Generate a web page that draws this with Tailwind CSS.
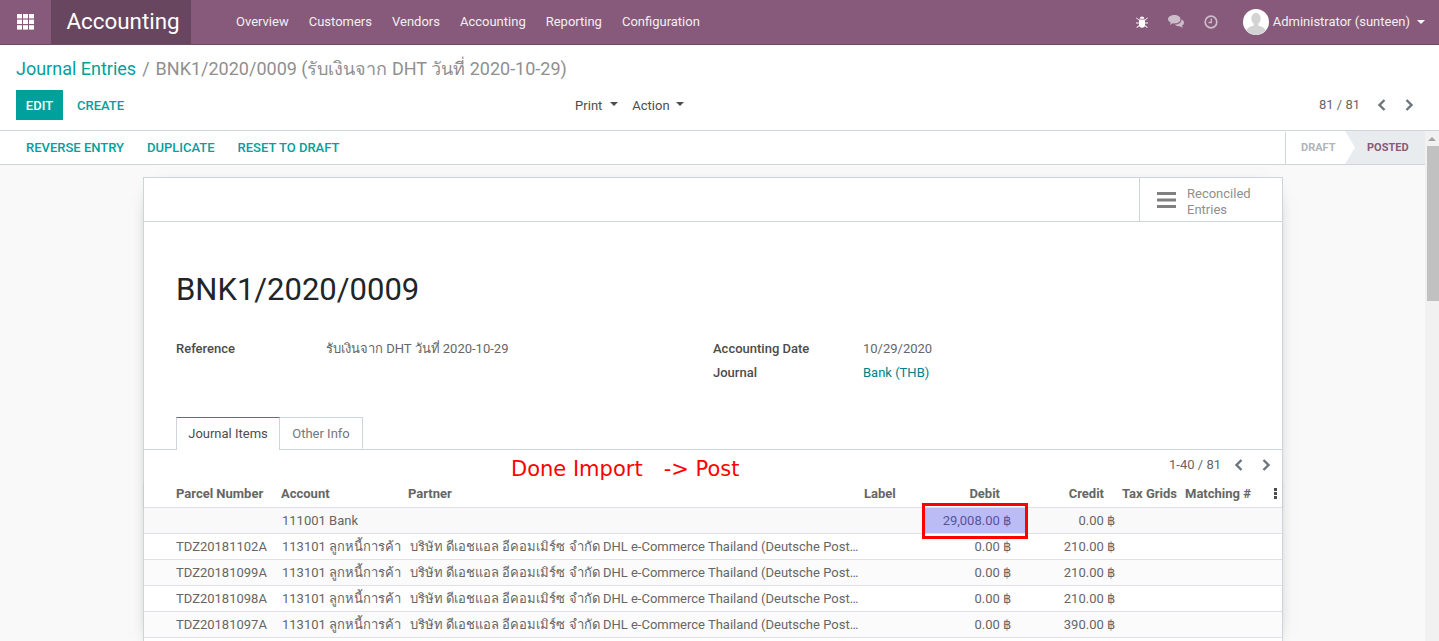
<!DOCTYPE html>
<html lang="en">
<head>
    <meta charset="UTF-8" />
    <title>Journal Entries - BNK1/2020/0009</title>
    <script src="https://cdn.jsdelivr.net/npm/@tailwindcss/browser@4"></script>
</head>
<body class="h-[641px] overflow-hidden bg-white font-['Roboto','Noto_Sans',sans-serif] text-[13px] text-[#666666]">
    <!-- Navbar -->
    <header class="flex h-[45px] items-stretch border-b border-[#6d4a64] bg-[#875A7B] text-white">
        <a class="flex w-[51px] items-center justify-center">
            <svg class="h-[16px] w-[17px]" viewBox="0 0 17 16" fill="#fff">
                <rect x="0" y="0" width="5" height="4.4"/><rect x="6" y="0" width="5" height="4.4"/><rect x="12" y="0" width="5" height="4.4"/>
                <rect x="0" y="5.6" width="5" height="4.4"/><rect x="6" y="5.6" width="5" height="4.4"/><rect x="12" y="5.6" width="5" height="4.4"/>
                <rect x="0" y="11.2" width="5" height="4.4"/><rect x="6" y="11.2" width="5" height="4.4"/><rect x="12" y="11.2" width="5" height="4.4"/>
            </svg>
        </a>
        <div class="flex w-[140px] items-center justify-center pb-[1px] pl-[4px] text-[22.4px] bg-[#68465f]">Accounting</div>
        <nav class="ml-[45px] flex items-center gap-[20px] text-[#f3eef2]">
            <a>Overview</a><a>Customers</a><a>Vendors</a><a>Accounting</a><a>Reporting</a><a>Configuration</a>
        </nav>
        <div class="ml-auto flex items-center pr-[14px]">
            <svg class="h-[12px] w-[12px]" viewBox="0 0 13 13" fill="#fff"><path d="M4 3a2.500 2.500 0 0 1 5 0zM3.200 3.800h6.600v6c0 1.800-1.400 3-3.300 3s-3.300-1.200-3.300-3zM0.500 1.500l3 2.500-.6.700-3-2.500zM12.500 1.500l-3 2.500.6.700 3-2.500zM0 7h3v1H0zM10 7h3v1h-3zM3 10l.6.700-2.600 2.300-.6-.8zM10 10l-.6.700 2.600 2.300.6-.8z"/></svg>
            <svg class="ml-[20px] h-[14px] w-[16px]" viewBox="0 0 16 14" fill="#cdbcc9"><path d="M6.500 0C10 0 12.500 1.800 12.500 4.200S10 8.400 6.500 8.400c-.6 0-1.200 0-1.700-.2L2 10l.7-2.600C1 6.600 0 5.500 0 4.200 0 1.800 3 0 6.500 0z"/><path d="M13.500 4.500C15 5.200 16 6.300 16 7.700c0 1.200-.8 2.200-2 2.900l.6 2.400-2.800-1.700c-2 .2-4-.4-5-1.700 3.800 0 6.800-2 6.700-5.100z"/></svg>
            <svg class="ml-[20px] h-[14px] w-[14px]" viewBox="0 0 14 14" fill="none" stroke="#cdbcc9" stroke-width="1.700"><circle cx="7" cy="7" r="5.800"/><path d="M7.300 3.500v4H4.500" stroke-width="1.300"/></svg>
            <span class="relative ml-[25px] h-[26px] w-[26px] overflow-hidden rounded-full bg-white">
                <svg class="h-full w-full" viewBox="0 0 26 26" fill="#d3d3d3"><path d="M13 4c3 0 4.600 2.500 4.600 5.500 0 2.300-1 4.300-2.300 5.300v1.700c2.800 1 5.700 2 6.700 3.500v6.500H4V20c1-1.500 3.900-2.500 6.700-3.500v-1.700c-1.300-1-2.300-3-2.300-5.300C8.400 6.500 10 4 13 4z"/></svg>
            </span>
            <span class="ml-[4px] text-[#f3eef2]">Administrator (sunteen)</span>
            <span class="ml-[7px] h-0 w-0 border-x-[4px] border-t-[4px] border-x-transparent border-t-white"></span>
        </div>
    </header>

    <!-- Control panel -->
    <section class="h-[86px] border-b border-[#ced4da] px-[16px]">
        <div class="h-[45px] pt-[11px] text-[18px] leading-[26px] text-[#8f8f8f]">
            <a class="text-[#00A09D]">Journal Entries</a><span class="mx-[6px]">/</span><span>BNK1/2020/0009 (รับเงินจาก DHT วันที่ 2020-10-29)</span>
        </div>
        <div class="flex h-[30px] items-center">
            <button class="h-[30px] w-[47px] bg-[#00A09D] pt-[1px] text-[13px] font-medium text-white">EDIT</button>
            <button class="ml-[14px] pt-[1px] text-[13px] font-medium text-[#00A09D]">CREATE</button>
            <div class="ml-[451px] flex items-center pt-[1px] text-[#4c4c4c]">
                <span>Print</span><span class="ml-[8px] h-0 w-0 -translate-y-[2px] border-x-[4px] border-t-[4px] border-x-transparent border-t-[#4c4c4c]"></span>
                <span class="ml-[14px]">Action</span><span class="ml-[6px] h-0 w-0 -translate-y-[2px] border-x-[4px] border-t-[4px] border-x-transparent border-t-[#4c4c4c]"></span>
            </div>
            <div class="ml-auto flex items-center pr-[9px]">
                <span>81 / 81</span>
                <svg class="ml-[17px] h-[12px] w-[9px]" viewBox="0 0 9 12" fill="none" stroke="#6c757d" stroke-width="2.400"><path d="M7.500 1 2.500 6l5 5"/></svg>
                <svg class="ml-[19px] h-[12px] w-[9px]" viewBox="0 0 9 12" fill="none" stroke="#6c757d" stroke-width="2.400"><path d="M1.500 1l5 5-5 5"/></svg>
            </div>
        </div>
    </section>

    <div class="flex h-[510px]">
        <main class="w-[1425px] bg-[#f9f9f9]">
            <!-- Status bar -->
            <div class="flex h-[34px] items-stretch border-b border-[#ced4da] bg-white">
                <div class="flex items-center gap-[23px] pl-[26px] text-[13px] font-medium text-[#00A09D]">
                    <a>REVERSE ENTRY</a><a>DUPLICATE</a><a>RESET TO DRAFT</a>
                </div>
                <div class="ml-auto flex pt-[1px] text-[11px] font-bold">
                    <div class="flex w-[60px] items-center border-l border-[#ced4da] pl-[15px] text-[#adb5bd]">DRAFT</div>
                    <div class="-mt-[1px] flex w-[80px] items-center bg-[#e9ecef] pl-[22px] pt-[1px] text-[#875A7B] [clip-path:polygon(0_0,100%_0,100%_100%,0_100%,10px_50%)]">POSTED</div>
                </div>
            </div>

            <!-- Sheet -->
            <div class="relative ml-[143px] mt-[12px] h-[470px] w-[1140px] border border-[#ced4da] bg-white shadow-[0_5px_20px_-15px_black]">
                <div class="flex h-[44px] justify-end border-b border-[#ced4da]">
                    <div class="flex w-[143px] items-center border-l border-[#ced4da] pl-[17px] pt-[5px] leading-[16px] text-[#8f8f8f]">
                        <svg class="-mt-[5px] h-[16px] w-[20px]" viewBox="0 0 20 16" fill="#808080"><rect y="0" width="19" height="3"/><rect y="6.500" width="19" height="3"/><rect y="13" width="19" height="3"/></svg>
                        <span class="ml-[10px]">Reconciled<br>Entries</span>
                    </div>
                </div>

                <h1 class="ml-[32px] mt-[50px] text-[31px] leading-[36px] text-[#212529]">BNK1/2020/0009</h1>

                <div class="ml-[32px] mt-[29px] flex h-[80px] leading-[24px]">
                    <div class="flex w-[537px]">
                        <span class="w-[150px] font-medium text-[#4c4c4c]">Reference</span>
                        <span>รับเงินจาก DHT วันที่ 2020-10-29</span>
                    </div>
                    <div>
                        <div class="flex"><span class="w-[150px] font-medium text-[#4c4c4c]">Accounting Date</span><span>10/29/2020</span></div>
                        <div class="flex"><span class="w-[150px] font-medium text-[#4c4c4c]">Journal</span><a class="text-[#00808a]">Bank (THB)</a></div>
                    </div>
                </div>

                <!-- Tabs -->
                <div class="flex h-[33px] border-b border-[#ced4da] pl-[32px]">
                    <div class="-mb-px h-[33px] w-[104px] border-x border-t border-x-[#ced4da] border-t-[#875A7B] bg-white text-center leading-[31px] text-[#4c4c4c]">Journal Items</div>
                    <div class="h-[32px] w-[83px] border-y border-r border-[#ced4da] border-b-transparent text-center leading-[31px] text-[#777777]">Other Info</div>
                </div>

                <!-- Pager -->
                <div class="flex h-[30px] items-center justify-end pr-[11px]">
                    <span>1-40 / 81</span>
                    <svg class="ml-[13px] h-[12px] w-[9px]" viewBox="0 0 9 12" fill="none" stroke="#6c757d" stroke-width="2.400"><path d="M7.500 1 2.500 6l5 5"/></svg>
                    <svg class="ml-[19px] h-[12px] w-[9px]" viewBox="0 0 9 12" fill="none" stroke="#6c757d" stroke-width="2.400"><path d="M1.500 1l5 5-5 5"/></svg>
                </div>

                <!-- Journal items -->
                <table class="w-full table-fixed border-collapse">
                    <colgroup>
                        <col class="w-[137px]"><col class="w-[127px]"><col class="w-[456px]"><col class="w-[60px]"><col class="w-[103px]"><col class="w-[89px]"><col class="w-[64px]"><col class="w-[90px]"><col>
                    </colgroup>
                    <thead class="text-[#666666]">
                        <tr class="h-[27px] border-b border-[#dee2e6] shadow-[0_2px_3px_rgba(0,0,0,0.08)]">
                            <th class="pl-[32px] text-left font-bold whitespace-nowrap">Parcel Number</th>
                            <th class="text-left font-bold">Account</th>
                            <th class="text-left font-bold">Partner</th>
                            <th class="text-left font-bold">Label</th>
                            <th class="pr-[27px] text-right font-bold">Debit</th>
                            <th class="pr-[12px] text-right font-bold">Credit</th>
                            <th class="pl-[6px] text-left font-bold whitespace-nowrap">Tax Grids</th>
                            <th class="pl-[5px] text-left font-bold whitespace-nowrap">Matching #</th>
                            <th>
                                <svg class="ml-[4px] h-[11px] w-[3px]" viewBox="0 0 3 11" fill="#4c4c4c"><rect width="3" height="3"/><rect y="4" width="3" height="3"/><rect y="8" width="3" height="3"/></svg>
                            </th>
                        </tr>
                    </thead>
                    <tbody class="[&_td]:pt-[1px]">
                        <tr class="h-[26px] border-b border-[#dee2e6] bg-[#f9f9f9]">
                            <td class="pl-[32px]"></td><td class="pl-[1px]">111001 Bank</td><td></td><td></td>
                            <td class="bg-[#bbbbf5] pr-[16px] text-right text-[#555599]">29,008.00 ฿</td>
                            <td class="pr-[1px] text-right">0.00 ฿</td><td></td><td></td><td></td>
                        </tr>
                        <tr class="h-[26px] border-b border-[#dee2e6]">
                            <td class="pl-[32px]">TDZ20181102A</td><td class="pl-[1px] whitespace-nowrap">113101 ลูกหนี้การค้า</td>
                            <td class="pl-[2px] whitespace-nowrap">บริษัท ดีเอชแอล อีคอมเมิร์ซ จำกัด DHL e-Commerce Thailand (Deutsche Post…</td><td></td>
                            <td class="pr-[16px] text-right">0.00 ฿</td><td class="pr-[1px] text-right">210.00 ฿</td><td></td><td></td><td></td>
                        </tr>
                        <tr class="h-[26px] border-b border-[#dee2e6] bg-[#fbfbfb]">
                            <td class="pl-[32px]">TDZ20181099A</td><td class="pl-[1px] whitespace-nowrap">113101 ลูกหนี้การค้า</td>
                            <td class="pl-[2px] whitespace-nowrap">บริษัท ดีเอชแอล อีคอมเมิร์ซ จำกัด DHL e-Commerce Thailand (Deutsche Post…</td><td></td>
                            <td class="pr-[16px] text-right">0.00 ฿</td><td class="pr-[1px] text-right">210.00 ฿</td><td></td><td></td><td></td>
                        </tr>
                        <tr class="h-[26px] border-b border-[#dee2e6]">
                            <td class="pl-[32px]">TDZ20181098A</td><td class="pl-[1px] whitespace-nowrap">113101 ลูกหนี้การค้า</td>
                            <td class="pl-[2px] whitespace-nowrap">บริษัท ดีเอชแอล อีคอมเมิร์ซ จำกัด DHL e-Commerce Thailand (Deutsche Post…</td><td></td>
                            <td class="pr-[16px] text-right">0.00 ฿</td><td class="pr-[1px] text-right">210.00 ฿</td><td></td><td></td><td></td>
                        </tr>
                        <tr class="h-[26px] border-b border-[#dee2e6] bg-[#fbfbfb]">
                            <td class="pl-[32px]">TDZ20181097A</td><td class="pl-[1px] whitespace-nowrap">113101 ลูกหนี้การค้า</td>
                            <td class="pl-[2px] whitespace-nowrap">บริษัท ดีเอชแอล อีคอมเมิร์ซ จำกัด DHL e-Commerce Thailand (Deutsche Post…</td><td></td>
                            <td class="pr-[16px] text-right">0.00 ฿</td><td class="pr-[1px] text-right">390.00 ฿</td><td></td><td></td><td></td>
                        </tr>
                    </tbody>
                </table>

                <!-- Screenshot annotations -->
                <div class="absolute left-[367px] top-[278px] font-['DejaVu_Sans',sans-serif] text-[21px] leading-[26px] whitespace-pre text-[#ff0000]">Done Import<span class="ml-[21px]">-&gt; Post</span></div>
                <div class="absolute left-[778px] top-[325px] h-[36px] w-[106px] border-[3px] border-[#ff0000]"></div>
            </div>
        </main>

        <!-- Scrollbar -->
        <div class="flex w-[14px] flex-col items-center bg-[#f1f1f1]">
            <span class="mt-[6px] h-0 w-0 border-x-[4px] border-b-[4px] border-x-transparent border-b-[#a3a3a3]"></span>
            <span class="ml-[2px] mt-[5px] h-[155px] w-[12px] bg-[#c1c1c1]"></span>
        </div>
    </div>
</body>
</html>
